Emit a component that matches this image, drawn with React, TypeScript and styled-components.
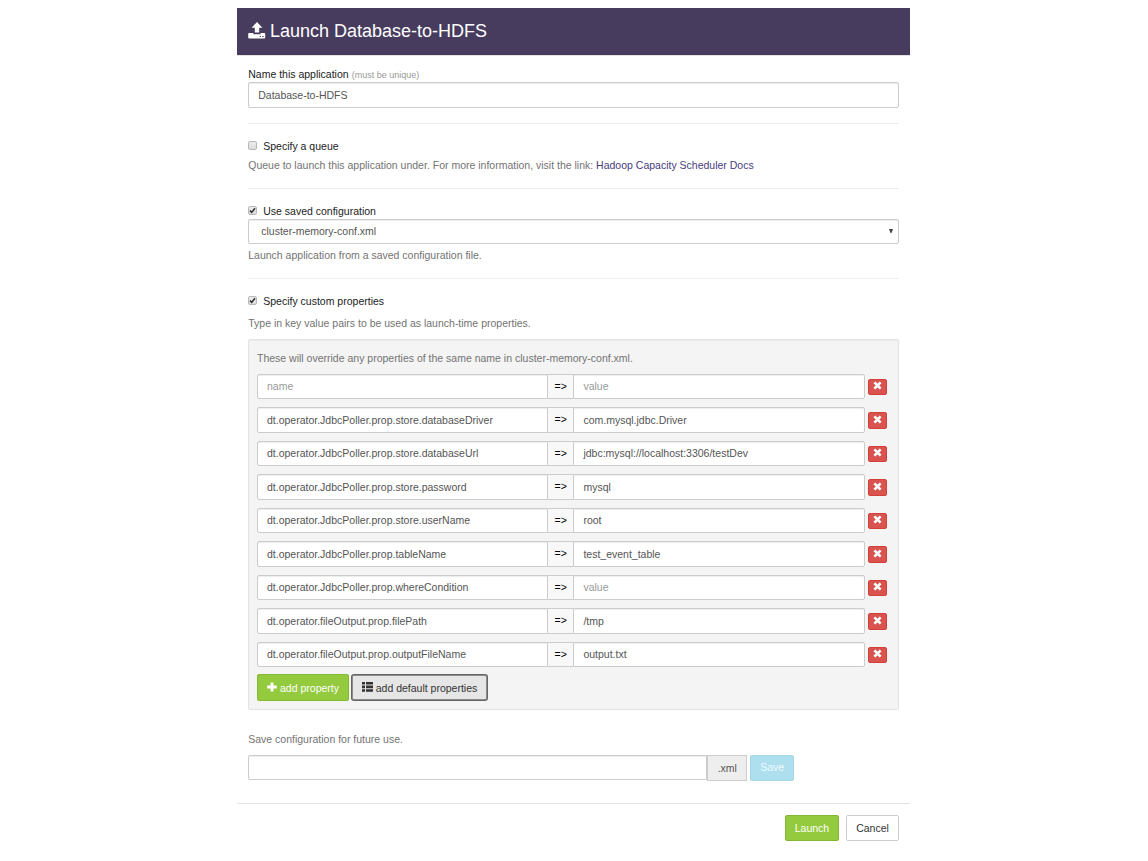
import React from 'react';
import styled, { createGlobalStyle, css } from 'styled-components';

const GlobalStyle = createGlobalStyle`
  *, *::before, *::after { box-sizing: border-box; }
  body {
    margin: 0;
    background: #fff;
    color: #333;
    font: 10.5px/15px "Liberation Sans", Arial, sans-serif;
  }
  input, button { font: inherit; margin: 0; }
`;

const Modal = styled.main`
  width: 673px;
  margin: 8px 0 0 237px;
`;

const Header = styled.header`
  display: flex;
  align-items: center;
  gap: 4px;
  height: 48px;
  padding: 0 11px 2px;
  background: #473c5e;
  border-bottom: 1px solid #e5e5e5;
  color: #fff;
`;

const Title = styled.h1`
  margin: 0;
  font-size: 18px;
  font-weight: 400;
  line-height: 26px;
`;

const Body = styled.div`
  height: 747px;
  padding: 11px 11px 0 11.25px;
`;

const Section = styled.section<{ $height: number }>`
  height: ${(p) => p.$height}px;
`;

const Divided = styled(Section)`
  border-top: 1px solid #eee;
  padding-top: 15px;
`;

const Label = styled.label`
  display: flex;
  align-items: center;
  height: 15px;
  color: #222;
`;

const Hint = styled.small`
  margin-left: 3px;
  font-size: 9px;
  color: #999;
  position: relative;
  top: 0.5px;
`;

const Check = styled.span`
  display: inline-flex;
  width: 9px;
  height: 9px;
  margin: 0 6px 1.2px 0;
  border: 1px solid #b8b8b8;
  border-radius: 2px;
  background: linear-gradient(#ececec, #dcdcdc);
`;

const Help = styled.p<{ $gap: number }>`
  margin: ${(p) => p.$gap}px 0 0;
  color: #737373;
`;

const Link = styled.a`
  color: #473c7e;
  text-decoration: none;
`;

const field = css`
  border: 1px solid #ccc;
  border-radius: 2px;
  background: #fff;
  box-shadow: inset 0 1px 1px rgba(0, 0, 0, 0.075);
  color: #555;
`;

const Input = styled.input<{ $side?: 'left' | 'right' }>`
  ${field}
  display: block;
  width: 100%;
  min-width: 0;
  height: 25.5px;
  padding: 0 9px;
  outline: none;
  ${(p) => p.$side === 'left' && 'border-radius: 2px 0 0 2px;'}
  ${(p) => p.$side === 'right' && 'border-radius: 0 2px 2px 0;'}
  &::placeholder { color: #999; opacity: 1; }
`;

const Select = styled.div`
  ${field}
  display: flex;
  align-items: center;
  justify-content: space-between;
  height: 25px;
  padding: 0 5px 0 12px;
  svg { margin-bottom: 1px; }
`;

const Well = styled.div`
  height: 371px;
  margin-top: 8px;
  padding: 11px 11px 0 7.75px;
  border: 1px solid #e3e3e3;
  border-radius: 2px;
  background: #f4f4f4;
  box-shadow: inset 0 1px 1px rgba(0, 0, 0, 0.04);
`;

const Rows = styled.div`
  display: flex;
  flex-direction: column;
  gap: 8px;
  margin-top: 7.9px;
`;

const Row = styled.div`
  display: grid;
  grid-template-columns: 291px 25.4px 291.6px 19px;
  height: 25.5px;
  input { padding-bottom: 0.6px; }
`;

const Arrow = styled.span`
  display: flex;
  align-items: center;
  justify-content: center;
  padding-bottom: 1px;
  border: solid #ccc;
  border-width: 1px 0;
  background: #f8f8f8;
  color: #000;
`;

const Remove = styled.button`
  display: flex;
  align-items: center;
  justify-content: center;
  width: 19px;
  height: 16.5px;
  margin: 4.9px 0 0 3px;
  padding: 0 0 2.5px;
  border: 1px solid #d43f3a;
  border-radius: 2px;
  background: #d9534f;
`;

const palette = {
  green: css`background: #94ca3d; border-color: #86b834; color: #fff;`,
  plain: css`background: #fff; border-color: #ccc; color: #333;`,
  pressed: css`background: #e6e6e6; border-color: #8c8c8c; color: #333; box-shadow: 0 0 0 1px #666;`,
  info: css`background: #addfee; border-color: #a3d8e8; color: #effafd; padding-bottom: 2px;`,
};

const Button = styled.button<{ $tone: keyof typeof palette; $width: number }>`
  display: flex;
  align-items: center;
  justify-content: center;
  gap: 3px;
  width: ${(p) => p.$width}px;
  height: 26px;
  padding: 0;
  border: 1px solid;
  border-radius: 2px;
  white-space: nowrap;
  svg { margin-bottom: 2px; }
  ${(p) => palette[p.$tone]}
`;

const Actions = styled.div`
  display: flex;
  align-items: center;
  gap: 3px;
  margin-top: 6.6px;
  & > button { padding-top: 2px; }
  & > :first-child { height: 27px; }
  & > :last-child { height: 25px; }
`;

const SaveRow = styled.div`
  display: grid;
  grid-template-columns: 459px 40px 44px;
  align-items: start;
  margin-top: 8px;
  & > :first-child { height: 25px; }
  & > :last-child { margin-left: 3px; }
`;

const Suffix = styled.span`
  display: flex;
  align-items: center;
  justify-content: center;
  height: 26px;
  border: 1px solid #ccc;
  background: #eee;
  color: #555;
`;

const Footer = styled.footer`
  display: flex;
  justify-content: flex-end;
  gap: 7px;
  padding: 11px 11px 0;
  border-top: 1px solid #e2e2e2;
`;

const UploadIcon = () => (
  <svg width="18" height="17" viewBox="0 0 18 17" fill="#fff">
    <path d="M9 0 14.4 5.8H11.2V10.6H6.8V5.8H3.6Z" />
    <path d="M1 11H5.4V12.2H12.6V11H16.4Q17.2 11 17.2 12V15.4Q17.2 16.4 16.2 16.4H1.2Q.2 16.4.2 15.4V12Q.2 11 1 11ZM11.8 14V15H13V14ZM14.4 14V15H15.6V14Z" fillRule="evenodd" />
  </svg>
);

const RemoveIcon = () => (
  <svg width="9" height="9" viewBox="0 0 9 9" stroke="#fff" strokeWidth="2.7">
    <path d="M1.4 1.4 7.6 7.6M7.6 1.4 1.4 7.6" />
  </svg>
);

const PlusIcon = () => (
  <svg width="10" height="10" viewBox="0 0 10 10" stroke="#fff" strokeWidth="2.8">
    <path d="M5 .4V9.6M.2 5H9.8" />
  </svg>
);

const ListIcon = () => (
  <svg width="11" height="10" viewBox="0 0 11 10" fill="#333">
    <path d="M0 0H3V2.6H0ZM4 0H11V2.6H4ZM0 3.6H3V6.2H0ZM4 3.6H11V6.2H4ZM0 7.2H3V9.8H0ZM4 7.2H11V9.8H4Z" />
  </svg>
);

const CaretIcon = () => (
  <svg width="4" height="4" viewBox="0 0 4 4" fill="#444">
    <path d="M0 0H4L2.5 4H1.5Z" />
  </svg>
);

const Checkbox = ({ checked }: { checked?: boolean }) => (
  <Check role="checkbox" aria-checked={!!checked}>
    {checked && (
      <svg width="7" height="7" viewBox="0 0 7 7" fill="none" stroke="#333" strokeWidth="1.6">
        <path d="M1 3.6 2.7 5.4 6 1.2" />
      </svg>
    )}
  </Check>
);

const properties: [string, string][] = [
  ['', ''],
  ['dt.operator.JdbcPoller.prop.store.databaseDriver', 'com.mysql.jdbc.Driver'],
  ['dt.operator.JdbcPoller.prop.store.databaseUrl', 'jdbc:mysql://localhost:3306/testDev'],
  ['dt.operator.JdbcPoller.prop.store.password', 'mysql'],
  ['dt.operator.JdbcPoller.prop.store.userName', 'root'],
  ['dt.operator.JdbcPoller.prop.tableName', 'test_event_table'],
  ['dt.operator.JdbcPoller.prop.whereCondition', ''],
  ['dt.operator.fileOutput.prop.filePath', '/tmp'],
  ['dt.operator.fileOutput.prop.outputFileName', 'output.txt'],
];

export default function App() {
  return (
    <>
      <GlobalStyle />
      <Modal>
        <Header>
          <UploadIcon />
          <Title>Launch Database-to-HDFS</Title>
        </Header>
        <Body>
          <Section $height={56}>
            <Label>
              Name this application <Hint>(must be unique)</Hint>
            </Label>
            <Input defaultValue="Database-to-HDFS" spellCheck={false} />
          </Section>
          <Divided $height={65}>
            <Label><Checkbox />Specify a queue</Label>
            <Help $gap={4}>
              Queue to launch this application under. For more information, visit the link:{' '}
              <Link>Hadoop Capacity Scheduler Docs</Link>
            </Help>
          </Divided>
          <Divided $height={90}>
            <Label><Checkbox checked />Use saved configuration</Label>
            <Select>cluster-memory-conf.xml<CaretIcon /></Select>
            <Help $gap={4}>Launch application from a saved configuration file.</Help>
          </Divided>
          <Divided $height={454}>
            <Label><Checkbox checked />Specify custom properties</Label>
            <Help $gap={7}>Type in key value pairs to be used as launch-time properties.</Help>
            <Well>
              <Help $gap={0}>These will override any properties of the same name in cluster-memory-conf.xml.</Help>
              <Rows>
                {properties.map(([name, value], i) => (
                  <Row key={i}>
                    <Input $side="left" placeholder="name" defaultValue={name} spellCheck={false} />
                    <Arrow>=&gt;</Arrow>
                    <Input $side="right" placeholder="value" defaultValue={value} spellCheck={false} />
                    <Remove aria-label="Remove"><RemoveIcon /></Remove>
                  </Row>
                ))}
              </Rows>
              <Actions>
                <Button $tone="green" $width={92}><PlusIcon />add property</Button>
                <Button $tone="pressed" $width={135}><ListIcon />add default properties</Button>
              </Actions>
            </Well>
          </Divided>
          <Help $gap={0}>Save configuration for future use.</Help>
          <SaveRow>
            <Input $side="left" aria-label="Configuration name" />
            <Suffix>.xml</Suffix>
            <Button $tone="info" $width={44}>Save</Button>
          </SaveRow>
        </Body>
        <Footer>
          <Button $tone="green" $width={54}>Launch</Button>
          <Button $tone="plain" $width={53}>Cancel</Button>
        </Footer>
      </Modal>
    </>
  );
}
